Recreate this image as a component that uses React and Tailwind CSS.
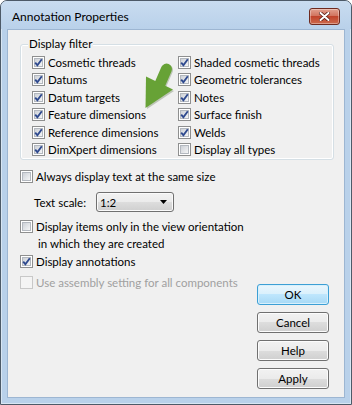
import React from 'react'

const Check = ({ checked, disabled }) => (
  <span
    className={`relative inline-block w-[13px] h-[13px] shrink-0 border ${
      disabled ? 'border-[#c8c8c8] bg-[#f4f4f4]' : 'border-[#8e8f8f] bg-white'
    }`}
  >
    {!disabled && (
      <span className="absolute left-[1px] top-[1px] w-[9px] h-[9px] border border-[#b3b8bf] bg-[linear-gradient(135deg,#cdd1d7,#f4f5f6)]" />
    )}
    {checked && (
      <svg className="absolute left-0 top-0" width="11" height="11" viewBox="0 0 11 11">
        <path d="M2.2 5.6 L4.4 8.2 L8.8 2.3" fill="none" stroke="#2f4a8f" strokeWidth="1.9" />
      </svg>
    )}
  </span>
)

const Row = ({ label, checked, disabled }) => (
  <div className="flex items-center gap-[3px] h-[17.5px]">
    <Check checked={checked} disabled={disabled} />
    <span className={disabled ? 'text-[#a0a0a0]' : 'text-black'}>{label}</span>
  </div>
)

const Btn = ({ children, primary }) => (
  <div
    className={`h-[21px] flex items-center justify-center rounded-[3px] border ${
      primary
        ? 'border-[#3c9fd5] bg-[linear-gradient(#eaf6fd,#d9f0fc_50%,#bee6fd_50%,#a7d9f5)] shadow-[inset_0_0_0_1px_#d8f0fc]'
        : 'border-[#707070] bg-[linear-gradient(#f2f2f2,#ebebeb_50%,#dddddd_50%,#cfcfcf)] shadow-[inset_0_0_0_1px_#fcfcfc]'
    }`}
  >
    {children}
  </div>
)

const left = [
  'Cosmetic threads',
  'Datums',
  'Datum targets',
  'Feature dimensions',
  'Reference dimensions',
  'DimXpert dimensions',
]
const right = [
  ['Shaded cosmetic threads', true],
  ['Geometric tolerances', true],
  ['Notes', true],
  ['Surface finish', true],
  ['Welds', true],
  ['Display all types', false],
]

export default function App() {
  return (
    <div className="w-[352px] h-[405px] bg-white font-['Lato',sans-serif] text-[11.5px] leading-[17px] text-black whitespace-nowrap">
      <div className="relative w-[352px] h-[405px] flex flex-col rounded-t-[7px] border border-[#4d5a68] bg-[#b9d1ea] px-[6px] pb-[6px] shadow-[inset_0_0_0_1px_rgba(255,255,255,0.45)]">
        {/* title bar */}
        <div className="h-[28px] shrink-0 -mx-[6px] px-[11px] flex items-center justify-between rounded-t-[6px] bg-[linear-gradient(#c9dcf0,#b9d1ea)]">
          <span className="pt-[3px] text-[12px]">Annotation Properties</span>
          <div className="mt-[2px] w-[31px] h-[17px] rounded-[3px] border border-[#6e2a1f] bg-[linear-gradient(#e2a08f,#d0705a_50%,#c1442c_50%,#cc6a4d)] shadow-[inset_0_0_0_1px_rgba(255,255,255,0.35)] flex items-center justify-center">
            <svg width="11" height="9" viewBox="0 0 11 9">
              <path d="M1.5 1 L9.5 8 M9.5 1 L1.5 8" stroke="#5a2018" strokeWidth="3.6" strokeLinecap="round" />
              <path d="M1.5 1 L9.5 8 M9.5 1 L1.5 8" stroke="#ffffff" strokeWidth="2" strokeLinecap="round" />
            </svg>
          </div>
        </div>

        {/* client area */}
        <div className="flex-1 border border-[#9db6d2] bg-[#f0f0f0] flex flex-col">
          {/* group box */}
          <div className="relative mt-[14px] ml-[12px] w-[314px] h-[116px] rounded-[3px] border border-[#d5dfe5] shadow-[inset_0_0_0_1px_#ffffff]">
            <span className="absolute -top-[10px] left-[7px] px-[1px] bg-[#f0f0f0]">Display filter</span>
            <div className="grid grid-cols-[146px_1fr] pl-[11px] pt-[8.5px]">
              <div className="flex flex-col">
                {left.map((l) => (
                  <Row key={l} label={l} checked />
                ))}
              </div>
              <div className="flex flex-col">
                {right.map(([l, c]) => (
                  <Row key={l} label={l} checked={c} />
                ))}
              </div>
            </div>
          </div>

          <div className="flex justify-between">
            <div className="pl-[12px] flex flex-col">
              <div className="mt-[8px] flex items-center gap-[3px] h-[17px]">
                <Check />
                <span>Always display text at the same size</span>
              </div>
              <div className="mt-[7px] flex items-center h-[20px]">
                <span className="ml-[14px] w-[62px]">Text scale:</span>
                <div className="w-[78px] h-[20px] rounded-[3px] border border-[#707070] bg-[linear-gradient(#f2f2f2,#ebebeb_50%,#dddddd_50%,#cfcfcf)] shadow-[inset_0_0_0_1px_#fafafa] flex items-center justify-between pl-[3px] pr-[6px]">
                  <span>1:2</span>
                  <svg width="7" height="4" viewBox="0 0 7 4">
                    <path d="M0 0 H7 L3.5 4 Z" fill="#000" />
                  </svg>
                </div>
              </div>
              <div className="mt-[6px] flex items-start gap-[3px]">
                <span className="mt-[2px]">
                  <Check />
                </span>
                <div className="flex flex-col">
                  <span>Display items only in the view orientation</span>
                  <span className="pl-[2px]">in which they are created</span>
                </div>
              </div>
              <div className="mt-[1px] flex items-center gap-[3px] h-[17px]">
                <Check checked />
                <span>Display annotations</span>
              </div>
              <div className="mt-[4px] flex items-center gap-[3px] h-[17px]">
                <Check disabled />
                <span className="text-[#a0a0a0]">Use assembly setting for all components</span>
              </div>
            </div>

            <div className="mr-[15px] mt-[124px] w-[72px] flex flex-col gap-[7px]">
              <Btn primary>OK</Btn>
              <Btn>Cancel</Btn>
              <Btn>Help</Btn>
              <Btn>Apply</Btn>
            </div>
          </div>
        </div>

        {/* green arrow */}
        <svg className="absolute -left-[1px] -top-[1px] pointer-events-none" width="352" height="405" viewBox="0 0 352 405">
          <g transform="translate(1 1)" opacity="0.25">
            <line x1="160" y1="84" x2="166.5" y2="69" stroke="#2d4a14" strokeWidth="11" strokeLinecap="round" />
            <path d="M146 108 L146 77 L173 90 Z" fill="#2d4a14" />
          </g>
          <line x1="160" y1="84" x2="166.5" y2="69" stroke="#67a236" strokeWidth="11" strokeLinecap="round" />
          <path d="M145.5 108 L146 76.5 L173 89.5 Z" fill="#67a236" />
        </svg>
      </div>
    </div>
  )
}
